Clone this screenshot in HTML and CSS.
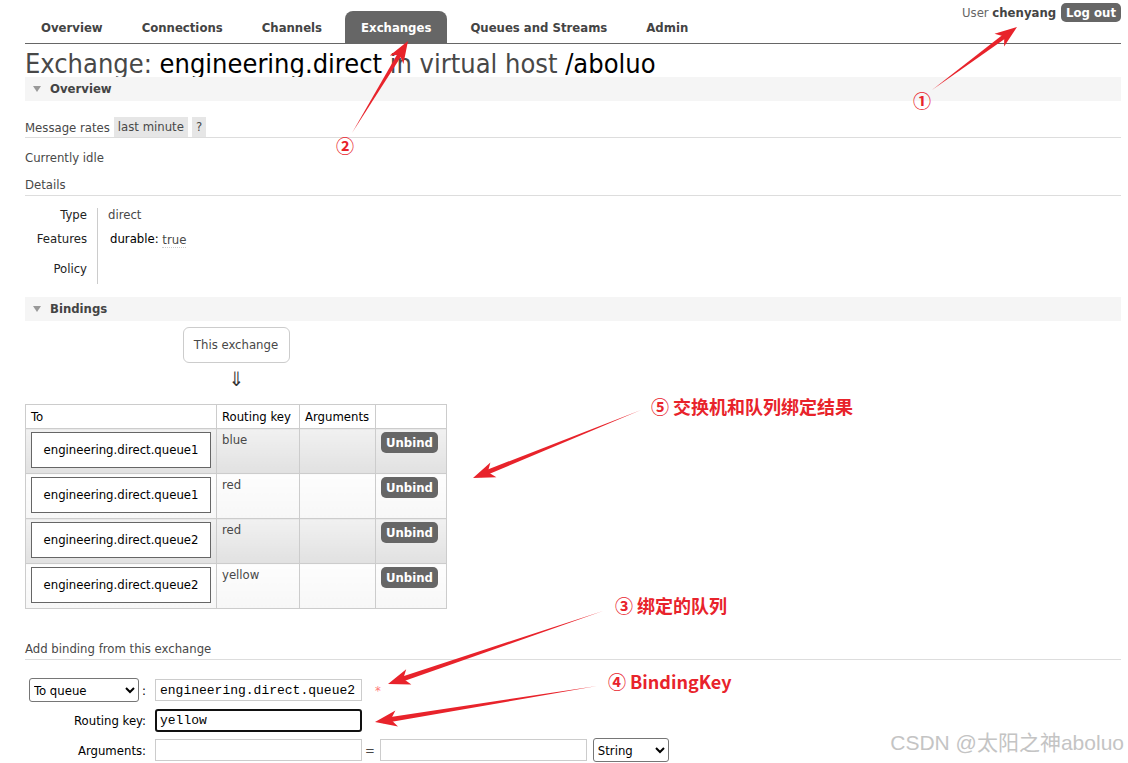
FILE: index.html
```html
<!DOCTYPE html>
<html lang="en">
<head>
    <meta charset="UTF-8">
    <title>RabbitMQ Management - Exchange</title>
    <link rel="stylesheet" href="styles.css">
</head>
<body>
<div class="page">

    <header class="topbar">
        <ul class="tabs">
            <li>Overview</li>
            <li>Connections</li>
            <li>Channels</li>
            <li class="active">Exchanges</li>
            <li>Queues and Streams</li>
            <li>Admin</li>
        </ul>
        <div class="login">
            <span>User <b>chenyang</b></span>
            <button class="btn">Log out</button>
        </div>
    </header>

    <h1>Exchange: <span class="name">engineering.direct</span> in virtual host <span class="name">/aboluo</span></h1>

    <h2 class="section-head">Overview</h2>
    <div class="rates">
        <span>Message rates</span>
        <span class="chip">last minute</span>
        <span class="chip">?</span>
    </div>
    <p class="idle">Currently idle</p>
    <h3 class="sub">Details</h3>
    <dl class="facts">
        <dt>Type</dt>
        <dd>direct</dd>
        <dt>Features</dt>
        <dd><span class="key">durable:</span> <abbr class="val">true</abbr></dd>
        <dt>Policy</dt>
        <dd></dd>
    </dl>

    <h2 class="section-head bindings-head">Bindings</h2>
    <div class="bindings">
        <div class="this-ex">This exchange</div>
        <div class="down">&#8659;</div>
        <table class="list">
            <colgroup>
                <col class="c-to">
                <col class="c-key">
                <col class="c-args">
                <col class="c-act">
            </colgroup>
            <thead>
                <tr><th>To</th><th>Routing key</th><th>Arguments</th><th></th></tr>
            </thead>
            <tbody>
                <tr class="odd">
                    <td><div class="qbox">engineering.direct.queue1</div></td>
                    <td>blue</td><td></td>
                    <td><button class="btn unbind">Unbind</button></td>
                </tr>
                <tr class="even">
                    <td><div class="qbox">engineering.direct.queue1</div></td>
                    <td>red</td><td></td>
                    <td><button class="btn unbind">Unbind</button></td>
                </tr>
                <tr class="odd">
                    <td><div class="qbox">engineering.direct.queue2</div></td>
                    <td>red</td><td></td>
                    <td><button class="btn unbind">Unbind</button></td>
                </tr>
                <tr class="even">
                    <td><div class="qbox">engineering.direct.queue2</div></td>
                    <td>yellow</td><td></td>
                    <td><button class="btn unbind">Unbind</button></td>
                </tr>
            </tbody>
        </table>
    </div>

    <h3 class="sub add-head">Add binding from this exchange</h3>
    <form class="bind-form">
        <div class="lbl">
            <select class="sel sel-dest"><option>To queue</option><option>To exchange</option></select>
            <span>:</span>
        </div>
        <div class="fld">
            <input type="text" class="txt" value="engineering.direct.queue2">
            <span class="req">*</span>
        </div>

        <div class="lbl">Routing key:</div>
        <div class="fld">
            <input type="text" class="txt focus" value="yellow">
        </div>

        <div class="lbl">Arguments:</div>
        <div class="fld">
            <input type="text" class="txt">
            <span class="eq">=</span>
            <input type="text" class="txt">
            <select class="sel sel-type"><option>String</option><option>Number</option><option>Boolean</option></select>
        </div>
    </form>

    <!-- red annotations drawn over the screenshot -->
    <svg class="marks" width="1128" height="763" viewBox="0 0 1128 763">
        <g fill="#e8232b">
            <polygon points="932,90 1012.1,33.8 1009.1,29.8"/>
            <polygon points="1017,27 1004.1,46.5 1004.2,36.5 994.5,33.7"/>

            <polygon points="352,133 405.9,49.1 401.7,46.5"/>
            <polygon points="408,41 403.4,64 399.7,54.7 389.8,55.6"/>

            <polygon points="603,611 394.8,679 396.4,683.8"/>
            <polygon points="388,684 406.2,669.3 403.2,678.8 411.4,684.5"/>

            <polygon points="597,686 382.5,718.2 383.3,723.2"/>
            <polygon points="375,722 395.4,710.6 390.8,719.4 398,726.4"/>

            <polygon points="641,410 479.5,472.7 481.3,477.3"/>
            <polygon points="473,478 490.4,462.4 487.8,472 496.4,477.2"/>
        </g>
    </svg>
    <span class="note n1">&#9312;</span>
    <span class="note n2">&#9313;</span>
    <span class="note n3">&#9314; 绑定的队列</span>
    <span class="note n4">&#9315; BindingKey</span>
    <span class="note n5">&#9316; 交换机和队列绑定结果</span>

    <div class="watermark">CSDN @太阳之神aboluo</div>
</div>
</body>
</html>
```

FILE: styles.css
```css
* {
    box-sizing: border-box;
}

html, body {
    margin: 0;
    padding: 0;
    background: #fff;
}

body {
    font-family: "DejaVu Sans Condensed", "Liberation Sans", sans-serif;
    font-size: 13px;
    color: #484848;
}

.page {
    position: relative;
    width: 1128px;
    height: 763px;
    padding: 0 7px 0 25px;
    overflow: hidden;
}

/* top navigation */
.topbar {
    display: flex;
    justify-content: space-between;
    align-items: flex-start;
    height: 44px;
    border-bottom: 1px solid #666;
}

.tabs {
    display: flex;
    list-style: none;
    margin: 11px 0 0;
    padding: 0;
}

.tabs li {
    height: 32px;
    line-height: 33px;
    padding: 0 16px;
    margin-right: 7px;
    font-size: 13px;
    font-weight: bold;
    color: #444;
    border-radius: 8px 8px 0 0;
}

.tabs li.active {
    background: #666;
    color: #fff;
}

.login {
    display: flex;
    align-items: center;
    gap: 5px;
    margin-top: 3px;
    color: #666;
}

.login b {
    color: #444;
}

.btn {
    height: 19px;
    padding: 0 5px;
    border: 0;
    border-radius: 5px;
    background: #666;
    color: #fff;
    font-family: inherit;
    font-size: 13px;
    font-weight: bold;
    line-height: 19px;
}

/* page title */
h1 {
    margin: 0;
    padding-top: 6px;
    font-size: 27px;
    line-height: 28px;
    font-weight: normal;
    color: #484848;
    white-space: nowrap;
}

h1 .name {
    color: #000;
}

.section-head {
    position: relative;
    margin: -1px 0 0;
    height: 24px;
    line-height: 24px;
    padding-left: 25px;
    background: #f5f5f5;
    font-size: 13px;
    font-weight: bold;
    color: #444;
}

.section-head::before {
    content: "";
    position: absolute;
    left: 8px;
    top: 9px;
    border-left: 4.5px solid transparent;
    border-right: 4.5px solid transparent;
    border-top: 6px solid #999;
}

.rates {
    display: flex;
    align-items: center;
    gap: 4px;
    margin-top: 16px;
    height: 21px;
    border-bottom: 1px solid #ddd;
}

.chip {
    line-height: 20px;
    padding: 0 4px;
    background: #e6e6e6;
}

.idle {
    margin: 10px 0 0;
    line-height: 20px;
}

.sub {
    margin: 7px 0 0;
    line-height: 20px;
    font-size: 13px;
    font-weight: normal;
    border-bottom: 1px solid #ddd;
}

/* details list */
.facts {
    display: grid;
    grid-template-columns: 72px auto;
    grid-template-rows: 13px 36px 27px;
    margin: 12px 0 0;
}

.facts dt {
    text-align: right;
    padding-right: 10px;
    color: #222;
}

.facts dd {
    margin: 0;
    padding-left: 10px;
    border-left: 1px solid #ccc;
}

.facts dt:nth-of-type(1), .facts dd:nth-of-type(1) { line-height: 13px; }
.facts dt:nth-of-type(2), .facts dd:nth-of-type(2) { line-height: 36px; }
.facts dt:nth-of-type(3), .facts dd:nth-of-type(3) { line-height: 24px; }

.facts .key {
    color: #000;
    margin-left: 2px;
}

.facts .val {
    text-decoration: none;
    border-bottom: 1px dotted #ccc;
    position: relative;
    top: 1px;
}

/* bindings */
.bindings-head {
    margin-top: 13px;
}

.bindings {
    display: flex;
    flex-direction: column;
    align-items: center;
    width: max-content;
}

.this-ex {
    margin-top: 6px;
    width: 107px;
    height: 36px;
    line-height: 34px;
    text-align: center;
    border: 1px solid #ccc;
    border-radius: 6px;
}

.down {
    margin-top: 4px;
    font-size: 20px;
    line-height: 24px;
    color: #333;
}

.list {
    width: 421px;
    margin-top: 13px;
    border-collapse: collapse;
    table-layout: fixed;
}

.c-to { width: 191px; }
.c-key { width: 83px; }
.c-args { width: 76px; }
.c-act { width: 71px; }

.list th, .list td {
    border: 1px solid #ccc;
    text-align: left;
    vertical-align: top;
}

.list th {
    height: 24px;
    padding: 0 5px;
    font-weight: normal;
    color: #000;
    line-height: 23px;
    background: #fff;
}

.list td {
    height: 45px;
    padding: 3px 5px;
    line-height: 16px;
}

.list tr.odd td {
    background: linear-gradient(#f1f1f1, #e1e1e1);
}

.list tr.even td {
    background: linear-gradient(#fdfdfd, #f7f7f7);
}

.qbox {
    width: 180px;
    height: 36px;
    line-height: 34px;
    text-align: center;
    border: 1px solid #666;
    background: #fff;
    color: #000;
}

.unbind {
    height: 21px;
    line-height: 21px;
    padding: 0 5px;
}

/* add binding form */
.add-head {
    margin-top: 30px;
}

.bind-form {
    display: grid;
    grid-template-columns: 125px auto;
    grid-auto-rows: 24px;
    row-gap: 6px;
    margin-top: 18px;
    align-items: center;
}

.bind-form .lbl {
    display: flex;
    justify-content: flex-end;
    align-items: center;
    gap: 3px;
    padding-right: 4px;
    color: #000;
}

.bind-form .fld {
    display: flex;
    align-items: center;
    padding-left: 5px;
}

.sel {
    height: 24px;
    font-family: inherit;
    font-size: 13px;
    color: #000;
    border: 1px solid #767676;
    border-radius: 3px;
    background: #fff;
}

.sel-dest {
    width: 110px;
}

.sel-type {
    width: 76px;
    margin-left: 6px;
}

.txt {
    width: 207px;
    height: 22px;
    padding: 1px 4px;
    border: 1px solid #ccc;
    font-family: "Liberation Mono", monospace;
    font-size: 13px;
    color: #000;
    outline: none;
}

.txt.focus {
    height: 23px;
    padding: 0 3px;
    border: 2px solid #111;
    border-radius: 3px;
}

.req {
    margin-left: 13px;
    color: #f77;
}

.eq {
    margin: 0 5px 0 3px;
}

/* annotation overlay */
.marks {
    position: absolute;
    left: 0;
    top: 0;
    pointer-events: none;
}

.note {
    position: absolute;
    font-family: "Noto Sans CJK SC", sans-serif;
    font-size: 18px;
    font-weight: bold;
    line-height: 24px;
    color: #e8232b;
    white-space: nowrap;
}

.n1 { left: 913px; top: 88px; }
.n2 { left: 336px; top: 133px; }
.n3 { left: 615px; top: 593px; }
.n4 { left: 608px; top: 669px; }
.n5 { left: 651px; top: 394px; }

.watermark {
    position: absolute;
    right: 4px;
    top: 729px;
    font-family: "Liberation Sans", "Noto Sans CJK SC", sans-serif;
    font-size: 21px;
    line-height: 28px;
    color: #c4c4c4;
    white-space: nowrap;
}
```
